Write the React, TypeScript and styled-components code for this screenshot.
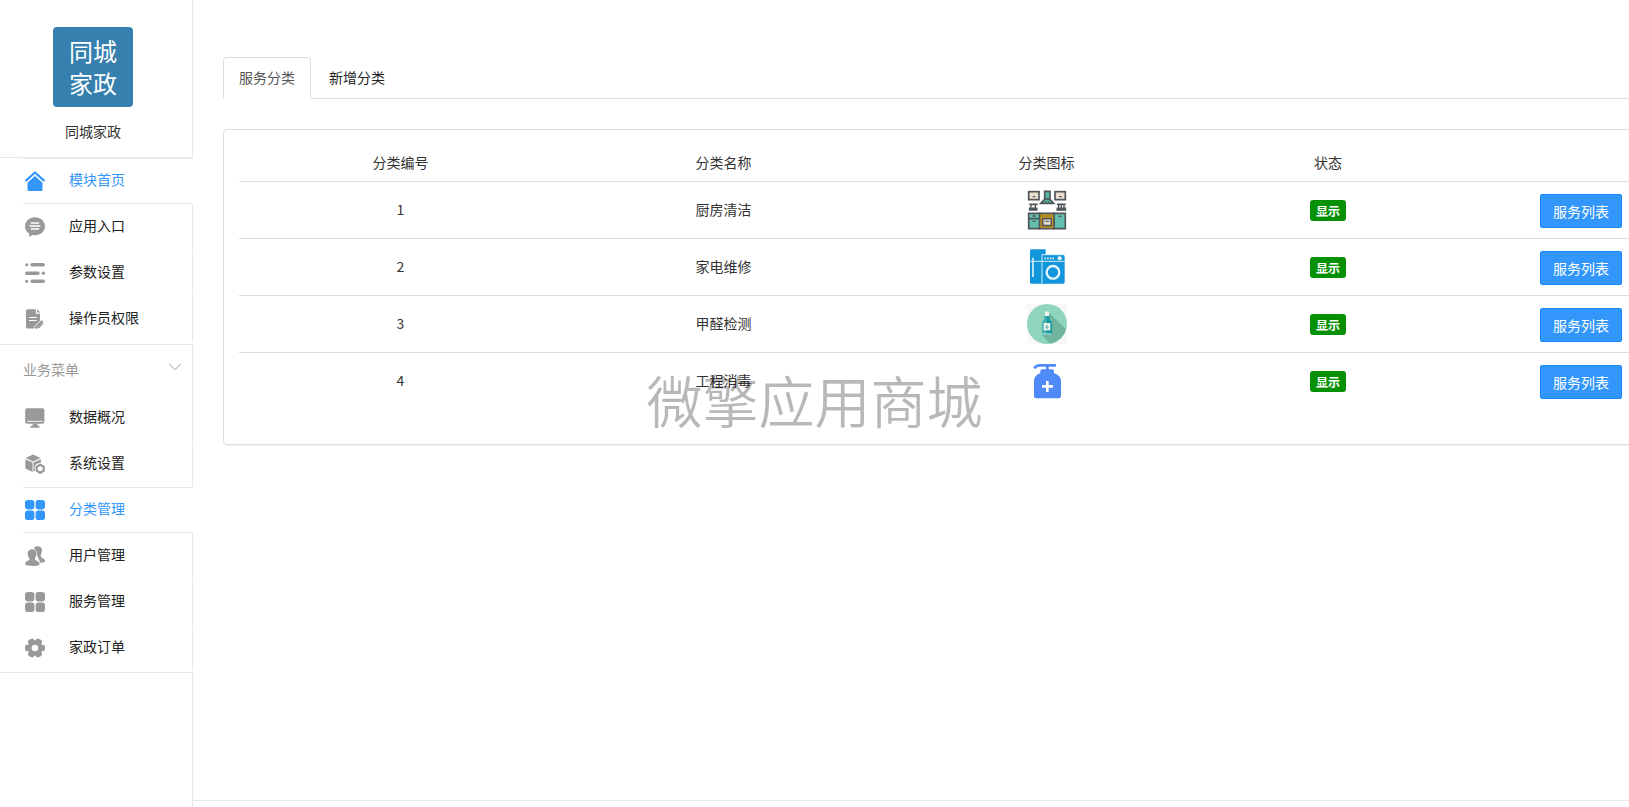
import React from "react";
import styled, { createGlobalStyle, css } from "styled-components";

const blue = "#3296fa";
const line = "#e7e7e7";
const tableLine = "#dddddd";
const fontStack = '"Noto Sans CJK SC", "Noto Sans", sans-serif';

const GlobalStyle = createGlobalStyle`
  *, *::before, *::after { box-sizing: border-box; }
  body {
    margin: 0;
    background: #fff;
    color: #333;
    font: 14px/20px ${fontStack};
  }
  button { font: inherit; }
  a { color: inherit; text-decoration: none; }
`;

const Page = styled.div`
  display: flex;
  min-height: 100vh;
`;

/* ---------- sidebar ---------- */

const Sidebar = styled.aside`
  display: flex;
  flex-direction: column;
  flex: 0 0 193px;
`;

const Brand = styled.div`
  display: flex;
  flex-direction: column;
  align-items: center;
  gap: 14px;
  height: 158px;
  padding: 27px 6px 0 0;
  border-right: 1px solid ${line};
  border-bottom: 1px solid ${line};
`;

const Logo = styled.div`
  width: 80px;
  height: 80px;
  padding: 8px 0;
  border-radius: 4px;
  background: #3580ae;
  color: #fff;
  font-size: 24px;
  line-height: 32px;
  text-align: center;
`;

const Menu = styled.ul`
  margin: 0;
  padding: 0 0 2px;
  list-style: none;
  border-bottom: 1px solid ${line};

  & + & {
    padding-bottom: 1px;
  }
`;

const MenuLink = styled.a<{ $active?: boolean }>`
  display: flex;
  align-items: flex-start;
  gap: 24px;
  height: 46px;
  margin-left: 23px;
  padding: 11px 2px 0;
  border-right: 1px solid ${line};
  border-bottom: 1px solid #fff;
  color: #222;

  svg {
    flex: none;
    margin-top: 2px;
    color: #999;
  }

  ${(p) =>
    p.$active &&
    css`
      padding-top: 10px;
      border-right-color: transparent;
      border-top: 1px solid ${line};
      border-bottom: 1px solid ${line};
      color: ${blue};
      svg {
        color: ${blue};
      }
    `}
`;

const MenuHeading = styled.button`
  display: flex;
  align-items: center;
  justify-content: space-between;
  width: 100%;
  height: 50px;
  padding: 0 10px 2px 23px;
  border: 0;
  border-right: 1px solid ${line};
  background: none;
  color: #999;

  svg {
    margin-bottom: 4px;
  }
`;

const SidebarRest = styled.div`
  flex: 1;
  border-right: 1px solid ${line};
`;

/* ---------- main column ---------- */

const Main = styled.main`
  display: flex;
  flex: 1;
  flex-direction: column;
  min-width: 0;
  overflow: hidden;
`;

const Content = styled.div`
  flex: 1;
  min-width: 1537px;
  padding: 57px 0 30px 30px;
`;

const Footer = styled.footer`
  height: 7px;
  border-top: 1px solid ${line};
`;

const Tabs = styled.nav`
  display: flex;
  gap: 2px;
  height: 42px;
  margin-bottom: 30px;
  border-bottom: 1px solid ${tableLine};
`;

const Tab = styled.a<{ $active?: boolean }>`
  height: 42px;
  padding: 9px 15px;
  border: 1px solid transparent;
  border-radius: 4px 4px 0 0;
  color: #222;

  ${(p) =>
    p.$active &&
    css`
      border-color: ${tableLine};
      border-bottom-color: #fff;
      background: #fff;
      color: #555;
    `}
`;

const Panel = styled.section`
  padding: 15px 15px 35px;
  border: 1px solid ${tableLine};
  border-radius: 4px;
  box-shadow: 0 1px 1px rgba(0, 0, 0, 0.05);
`;

const Table = styled.table`
  width: 100%;
  table-layout: fixed;
  border-collapse: collapse;
  text-align: center;
`;

const Col = styled.col<{ $width?: number }>`
  width: ${(p) => (p.$width ? `${p.$width}px` : "auto")};
`;

const HeadCell = styled.th`
  height: 36px;
  padding: 0 8px 2px;
  font-weight: 400;
`;

const Cell = styled.td`
  height: 57px;
  padding: 8px;
  border-top: 1px solid ${tableLine};
  vertical-align: middle;

  svg {
    display: block;
    margin: 0 auto;
  }
`;

const TextCell = styled(Cell)`
  padding-bottom: 10px;
`;

const ActionCell = styled(Cell)`
  padding-top: 10px;
`;

const Badge = styled.span`
  display: inline-block;
  padding: 0 6px;
  border-radius: 3px;
  background: #069006;
  color: #fff;
  font-size: 12px;
  font-weight: 700;
  line-height: 21px;
  vertical-align: middle;
`;

const ListButton = styled.button`
  height: 34px;
  padding: 0 12px;
  border: 1px solid #1988fa;
  border-radius: 2px;
  background: ${blue};
  color: #fff;
  vertical-align: middle;
`;

const Watermark = styled.div`
  position: fixed;
  inset: 0 0 10px;
  display: flex;
  align-items: center;
  justify-content: center;
  color: rgba(0, 0, 0, 0.28);
  font-size: 56px;
  font-weight: 350;
  line-height: 60px;
  white-space: nowrap;
  pointer-events: none;
`;

/* ---------- icons ---------- */

const MenuIcon = ({ children }: { children: React.ReactNode }) => (
  <svg width="20" height="20" viewBox="0 0 20 20" fill="currentColor" aria-hidden="true">
    {children}
  </svg>
);

const HomeIcon = () => (
  <MenuIcon>
    <path d="M1.300 9.400 10 1.500l8.700 7.900" fill="none" stroke="currentColor" strokeWidth="2.200" strokeLinecap="round" strokeLinejoin="round" />
    <path d="M10 4.900 17.500 11.700v6.800a1.500 1.500 0 0 1-1.500 1.500H4a1.500 1.500 0 0 1-1.500-1.500v-6.800z" />
  </MenuIcon>
);

const ChatIcon = () => (
  <MenuIcon>
    <path d="M10 .2c5.500 0 10 3.900 10 9s-4.500 9-10 9c-.9 0-1.700-.1-2.500-.3L4.200 20v-3.400C1.600 15 0 12.300 0 9.200c0-5.100 4.500-9 10-9z" />
    <path d="M6.300 6h7.400M5 9h10M6.300 12h7.400" stroke="#fff" strokeWidth="1.300" strokeLinecap="round" />
  </MenuIcon>
);

const SlidersIcon = () => (
  <MenuIcon>
    <path d="M7 1.800h11.300M1.700 10.200h11.300M7 18.300h11.300" fill="none" stroke="currentColor" strokeWidth="3.400" strokeLinecap="round" />
    <circle cx="1.700" cy="1.800" r="1.600" />
    <circle cx="18.300" cy="10.200" r="1.600" />
    <circle cx="1.700" cy="18.300" r="1.600" />
  </MenuIcon>
);

const DocEditIcon = () => (
  <MenuIcon>
    <path d="M2.500.3h8.300v4.500h4.200v7l-6 7.700H2.500A1.500 1.500 0 0 1 1 18V1.800A1.500 1.500 0 0 1 2.500.3zM12 .3l3.200 3.300H12z" />
    <path d="M4 8.500h7.700M4 11.500h7.700" stroke="#fff" strokeWidth="1.200" />
    <path d="m10.500 19.500 7.300-7.700" stroke="#fff" strokeWidth="4" />
    <path d="m10.500 19.300 7-7.300" stroke="currentColor" strokeWidth="2.600" />
    <path d="m13.500 19 4.500-4.700" stroke="currentColor" strokeWidth="1.200" />
  </MenuIcon>
);

const MonitorIcon = () => (
  <MenuIcon>
    <rect x=".2" y=".2" width="19.200" height="15.600" rx="2" />
    <path d="M2.200 13.300h15.400" stroke="#fff" strokeWidth=".9" />
    <path d="M7.500 15.800h5v2h2v2h-9v-2h2z" />
  </MenuIcon>
);

const CubeGearIcon = () => (
  <MenuIcon>
    <path d="m8 .6 7.500 3.500L8 7.600.6 4.100zM.3 5.200l7.300 3.400v9.400L.3 14.400zM15.800 5.200v4c-2.700-.5-5.500 1.200-6 3.800-.3 1.400 0 2.600.5 3.600l-1.800 1.200V8.600z" />
    <path d="m15.200 10.800 3.500 2v4l-3.500 2-3.500-2v-4z" fill="none" stroke="currentColor" strokeWidth="2.200" strokeLinejoin="round" />
  </MenuIcon>
);

const GridIcon = () => (
  <MenuIcon>
    <rect x="0" y="0" width="9.400" height="9.400" rx="2.800" />
    <rect x="10.600" y="0" width="9.400" height="9.400" rx="2.800" />
    <rect x="0" y="10.600" width="9.400" height="9.400" rx="2.800" />
    <rect x="10.600" y="10.600" width="9.400" height="9.400" rx="2.800" />
  </MenuIcon>
);

const UsersIcon = () => (
  <MenuIcon>
    <path d="M9 1.800C10.300.4 12 .1 13.200.2c2.500.2 3.900 2 3.800 4.300-.1 2.500-1.500 4-1.300 5.400.4 2 4.200 2.300 4.300 4.900.1 1.500-2.200 2-4.800 1.800z" />
    <path
      d="M7 3.200c2.800 0 4.500 1.800 4.400 4.600 0 3-1.500 4-1.500 5.300 0 1.900 4.600 1.900 4.600 4.800 0 1.500-2.900 2-7.100 2-4.800 0-7.200-.4-7.200-2.100 0-2.800 4.300-2.800 4.300-4.700C4.500 11.800 2.600 10.500 2.600 7.700c0-2.700 1.800-4.500 4.400-4.500z"
      stroke="#fff"
      strokeWidth=".9"
      paintOrder="stroke"
    />
  </MenuIcon>
);

const GearIcon = () => (
  <MenuIcon>
    <circle cx="10" cy="10" r="7.600" />
    <rect x="6.700" y="0" width="6.600" height="20" rx="2.400" transform="rotate(30 10 10)" />
    <rect x="6.700" y="0" width="6.600" height="20" rx="2.400" transform="rotate(90 10 10)" />
    <rect x="6.700" y="0" width="6.600" height="20" rx="2.400" transform="rotate(150 10 10)" />
    <circle cx="10" cy="10" r="3.300" fill="#fff" />
  </MenuIcon>
);

const Chevron = () => (
  <svg width="14" height="8" viewBox="0 0 14 8" fill="none" stroke="#999" aria-hidden="true">
    <path d="m1 .7 6 6 6-6" />
  </svg>
);

const CategoryIcon = ({ label, children }: { label: string; children: React.ReactNode }) => (
  <svg width="40" height="40" viewBox="0 0 120 120" role="img" aria-label={label}>
    {children}
  </svg>
);

const KitchenIcon = () => (
  <CategoryIcon label="厨房清洁">
    <g stroke="#4f5558" strokeWidth="5">
      <rect x="5" y="5" width="31" height="24" fill="#e9ddd0" />
      <rect x="84" y="5" width="31" height="24" fill="#e9ddd0" />
      <path d="M17 20h8M96 20h8" strokeWidth="4" />
      <path d="M53 4h16v24l11 12H41l12-12z" fill="#58b8a0" />
      <path d="M53 27h16" />
      <path d="M55 34h4m4 0h4" strokeWidth="3" />
      <path d="M7 43h25M90 43h26" />
      <path d="M12 43v12m13-12v12M95 43v12m8-12v12m8-12v12" strokeWidth="4" />
      <path d="M8 55h9v5H8zm12 0h9v5h-9z" fill="#58b8a0" />
      <path d="M91 55h24v5H91z" fill="#b98a1b" />
      <path d="M5 70h33v46H5z" fill="#63bfae" />
      <path d="M81 70h34v46H81z" fill="#63bfae" />
      <path d="M38 70h43v46H38z" fill="#d9a011" />
      <path d="M5 86h33" />
      <path d="M17 78h9M17 94h9M95 79h9" strokeWidth="4" />
      <path d="M44 78h32" strokeWidth="3" strokeDasharray="4 3" />
      <path d="M47 86h26v21H47z" fill="#e9ddd0" />
      <path d="M53 94h14" strokeWidth="3" />
    </g>
  </CategoryIcon>
);

const ApplianceIcon = () => (
  <CategoryIcon label="家电维修">
    <path d="M13 7h40q3 0 3 3v100H13q-4 0-4-4V11q0-4 4-4z" fill="#1296db" />
    <path d="M46 24h62q5 0 5 5v77q0 4-4 4H46z" fill="#1296db" />
    <path d="M45 22v88M45 23h68M9 43h104" stroke="#d4edfa" strokeWidth="3" fill="none" />
    <path d="M18 32v58" stroke="#d4edfa" strokeWidth="5" />
    <path d="M52 34h30" stroke="#d4edfa" strokeWidth="5" strokeDasharray="5 3" />
    <circle cx="98" cy="34" r="6" fill="#fff" />
    <circle cx="78" cy="76" r="19" fill="none" stroke="#e4f4fd" strokeWidth="7" />
  </CategoryIcon>
);

const BottleIcon = () => (
  <CategoryIcon label="甲醛检测">
    <path d="M0 0h120v120H0z" fill="#f8f8f8" />
    <circle cx="60" cy="60" r="60" fill="#8fd5bd" />
    <path d="M66 27 117 75a60 60 0 0 1-47 44L45 93z" fill="#70b49e" />
    <path d="M53 36h14l1 10 7 11v35H45V57l7-11z" fill="#17989e" />
    <path d="M53 38h6v54H45V57l7-11z" fill="#42b4b3" />
    <path d="M54 23h12v13H54z" fill="#f5f5ed" />
    <path d="M50 57h20v22H50z" fill="#edf5ef" />
    <path d="m60 61 5 9a5 5 0 1 1-10 0z" fill="#88bfc0" />
    <path d="M46 90h28" stroke="#d7eeeb" strokeWidth="3" />
  </CategoryIcon>
);

const SanitizerIcon = () => (
  <CategoryIcon label="工程消毒">
    <path d="M22 22c4-8 9-9 18-9h47M61 13v15" fill="none" stroke="#5089f8" strokeWidth="8" />
    <path d="M45 25h31q5 0 5 6v6c13 4 21 11 21 25v43q0 7-7 7H28q-7 0-7-7V62c0-14 7-21 19-25v-6q0-6 5-6z" fill="#5089f8" />
    <path d="M61 60v33M45 76h33" stroke="#fff" strokeWidth="8" />
  </CategoryIcon>
);

/* ---------- data ---------- */

type Item = { label: string; icon: React.ReactNode; active?: boolean };

const moduleMenu: Item[] = [
  { label: "模块首页", icon: <HomeIcon />, active: true },
  { label: "应用入口", icon: <ChatIcon /> },
  { label: "参数设置", icon: <SlidersIcon /> },
  { label: "操作员权限", icon: <DocEditIcon /> },
];

const businessMenu: Item[] = [
  { label: "数据概况", icon: <MonitorIcon /> },
  { label: "系统设置", icon: <CubeGearIcon /> },
  { label: "分类管理", icon: <GridIcon />, active: true },
  { label: "用户管理", icon: <UsersIcon /> },
  { label: "服务管理", icon: <GridIcon /> },
  { label: "家政订单", icon: <GearIcon /> },
];

const categories = [
  { id: 1, name: "厨房清洁", icon: <KitchenIcon /> },
  { id: 2, name: "家电维修", icon: <ApplianceIcon /> },
  { id: 3, name: "甲醛检测", icon: <BottleIcon /> },
  { id: 4, name: "工程消毒", icon: <SanitizerIcon /> },
];

const MenuItems = ({ items }: { items: Item[] }) => (
  <>
    {items.map((item) => (
      <li key={item.label}>
        <MenuLink href="#" $active={item.active}>
          {item.icon}
          {item.label}
        </MenuLink>
      </li>
    ))}
  </>
);

export default function App() {
  return (
    <>
      <GlobalStyle />
      <Page>
        <Sidebar>
          <Brand>
            <Logo>
              同城
              <br />
              家政
            </Logo>
            <span>同城家政</span>
          </Brand>
          <Menu>
            <MenuItems items={moduleMenu} />
          </Menu>
          <Menu>
            <li>
              <MenuHeading type="button">
                业务菜单
                <Chevron />
              </MenuHeading>
            </li>
            <MenuItems items={businessMenu} />
          </Menu>
          <SidebarRest />
        </Sidebar>

        <Main>
          <Content>
            <Tabs>
              <Tab href="#" $active>
                服务分类
              </Tab>
              <Tab href="#">新增分类</Tab>
            </Tabs>
            <Panel>
              <Table>
                <colgroup>
                  <Col $width={323} />
                  <Col $width={323} />
                  <Col $width={323} />
                  <Col $width={240} />
                  <Col />
                </colgroup>
                <thead>
                  <tr>
                    <HeadCell scope="col">分类编号</HeadCell>
                    <HeadCell scope="col">分类名称</HeadCell>
                    <HeadCell scope="col">分类图标</HeadCell>
                    <HeadCell scope="col">状态</HeadCell>
                    <HeadCell as="td" />
                  </tr>
                </thead>
                <tbody>
                  {categories.map((c) => (
                    <tr key={c.id}>
                      <TextCell>{c.id}</TextCell>
                      <TextCell>{c.name}</TextCell>
                      <Cell>{c.icon}</Cell>
                      <Cell>
                        <Badge>显示</Badge>
                      </Cell>
                      <ActionCell>
                        <ListButton type="button">服务列表</ListButton>
                      </ActionCell>
                    </tr>
                  ))}
                </tbody>
              </Table>
            </Panel>
          </Content>
          <Footer />
        </Main>
      </Page>
      <Watermark>微擎应用商城</Watermark>
    </>
  );
}
